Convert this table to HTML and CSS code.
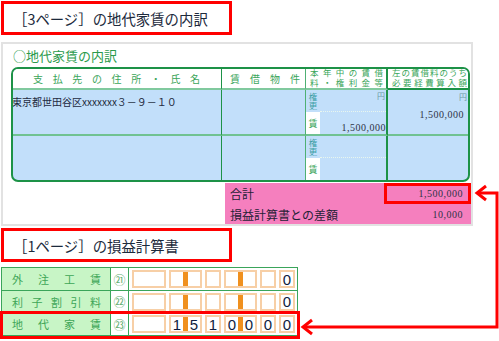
FILE: index.html
```html
<!DOCTYPE html>
<html lang="ja">
<head>
<meta charset="utf-8">
<title>地代家賃の内訳</title>
<link rel="stylesheet" href="styles.css">
</head>
<body>
<div class="page">
  <div class="heading">［3ページ］の地代家賃の内訳</div>

  <section class="panel">
    <div class="panel-title">○地代家賃の内訳</div>
    <div class="rent">
      <div class="hc c1 h1"><span>支</span><span>払</span><span>先</span><span>の</span><span>住</span><span>所</span><span>・</span><span>氏</span><span>名</span></div>
      <div class="hc c2 h2"><span>賃</span><span>借</span><span>物</span><span>件</span></div>
      <div class="hc c3 h3">
        <div class="hl"><span>本</span><span>年</span><span>中</span><span>の</span><span>賃</span><span>借</span></div>
        <div class="hl"><span>料</span><span>・</span><span>権</span><span>利</span><span>金</span><span>等</span></div>
      </div>
      <div class="hc c4 h4">
        <div class="hl"><span>左</span><span>の</span><span>賃</span><span>借</span><span>料</span><span>の</span><span>う</span><span>ち</span></div>
        <div class="hl"><span>必</span><span>要</span><span>経</span><span>費</span><span>算</span><span>入</span><span>額</span></div>
      </div>

      <div class="dc c1 r1 addr">東京都世田谷区xxxxxxx３－９－１０</div>
      <div class="dc c2 r1"></div>
      <div class="dc c3 r1 split">
        <div class="strip"><div class="strip-top"><span class="vt">権更</span></div><div class="strip-bot">賃</div></div>
        <div class="amt"><div class="amt-top"><span class="yen">円</span></div><div class="amt-bot"><span class="num">1,500,000</span></div></div>
      </div>
      <div class="dc c4 r1 deduct"><span class="yen">円</span><span class="num">1,500,000</span></div>

      <div class="dc c1"></div>
      <div class="dc c2"></div>
      <div class="dc c3 split">
        <div class="strip"><div class="strip-top"><span class="vt">権更</span></div><div class="strip-bot">賃</div></div>
        <div class="amt"><div class="amt-top"></div><div class="amt-bot"></div></div>
      </div>
      <div class="dc c4"></div>
    </div>

    <div class="summary">
      <div class="sum-row"><span class="sum-label">合計</span><span class="sum-val boxed">1,500,000</span></div>
      <div class="sum-row"><span class="sum-label">損益計算書との差額</span><span class="sum-val">10,000</span></div>
    </div>
  </section>

  <div class="heading heading-2">［1ページ］の損益計算書</div>

  <div class="ledger">
    <div class="lrow">
      <div class="llabel"><span>外</span><span>注</span><span>工</span><span>賃</span></div>
      <div class="lnum">㉑</div>
      <div class="lboxes">
        <span class="box wide"></span>
        <span class="box pair"><span class="dg"></span><span class="bar"></span><span class="dg"></span></span>
        <span class="box"><span class="dg"></span></span>
        <span class="box pair"><span class="dg"></span><span class="bar"></span><span class="dg"></span></span>
        <span class="box"><span class="dg"></span></span>
        <span class="box"><span class="dg">0</span></span>
      </div>
    </div>
    <div class="lrow">
      <div class="llabel"><span>利</span><span>子</span><span>割</span><span>引</span><span>料</span></div>
      <div class="lnum">㉒</div>
      <div class="lboxes">
        <span class="box wide"></span>
        <span class="box pair"><span class="dg"></span><span class="bar"></span><span class="dg"></span></span>
        <span class="box"><span class="dg"></span></span>
        <span class="box pair"><span class="dg"></span><span class="bar"></span><span class="dg"></span></span>
        <span class="box"><span class="dg"></span></span>
        <span class="box"><span class="dg">0</span></span>
      </div>
    </div>
    <div class="lrow lrow-hl">
      <div class="llabel"><span>地</span><span>代</span><span>家</span><span>賃</span></div>
      <div class="lnum">㉓</div>
      <div class="lboxes">
        <span class="box wide"></span>
        <span class="box pair"><span class="dg">1</span><span class="bar"></span><span class="dg">5</span></span>
        <span class="box"><span class="dg">1</span></span>
        <span class="box pair"><span class="dg">0</span><span class="bar"></span><span class="dg">0</span></span>
        <span class="box"><span class="dg">0</span></span>
        <span class="box"><span class="dg">0</span></span>
      </div>
    </div>
  </div>

  <svg class="arrow" width="499" height="341" viewBox="0 0 499 341">
    <path d="M303 327 H497 V193 H477" fill="none" stroke="#ff0000" stroke-width="3"/>
    <polyline points="312,320 303,327 312,334" fill="none" stroke="#ff0000" stroke-width="3"/>
    <polyline points="486,186 477,193 486,200" fill="none" stroke="#ff0000" stroke-width="3"/>
  </svg>
</div>
</body>
</html>
```

FILE: styles.css
```css
* { box-sizing: border-box; margin: 0; padding: 0; }
body { margin: 0; background: #fff; font-family: "Noto Sans CJK JP", sans-serif; color: #222; }
.page { position: relative; width: 499px; height: 341px; overflow: hidden; }

.heading {
  margin: 1px 0 0 1px;
  width: 231px;
  height: 34px;
  border: 3px solid #ff0000;
  padding: 1px 0 0 9px;
  font-size: 14.4px;
  line-height: 27px;
  color: #1c2a3c;
  white-space: nowrap;
}
.heading-2 { margin-top: 2px; }

.panel {
  margin: 7px 0 0 1px;
  width: 472px;
  height: 184px;
  border: 2px solid #e2e2e2;
}
.panel-title {
  height: 23px;
  line-height: 24px;
  padding-left: 10px;
  font-size: 13px;
  color: #2b9a4b;
}

.rent {
  margin-left: 8px;
  width: 459px;
  height: 115px;
  border: 2px solid #1d9247;
  border-radius: 7px;
  overflow: hidden;
  display: grid;
  grid-template-columns: 209px 84px 82px 80px;
  grid-template-rows: 21px 46px 44px;
  background: #c2dffa;
}
.c1 { border-right: 1px solid #1d9247; }
.c2 { border-right: 1px solid #4fb073; }
.c3 { border-right: 2px solid #1d9247; }

.hc {
  background: #fff;
  border-bottom: 2px solid #80c99e;
  color: #3aa55a;
  font-size: 10px;
}
.hc.c4 { border-bottom-color: #1d9247; }
.h1, .h2 { display: flex; justify-content: space-between; align-items: center; }
.h1 { padding: 0 21px 0 20px; }
.h2 { padding: 0 5px 0 8px; }
.h3, .h4 {
  display: flex;
  flex-direction: column;
  justify-content: center;
  font-family: "Liberation Sans", "Noto Sans CJK JP", sans-serif;
  font-size: 8.5px;
}
.h3 { padding: 0 3px 0 4px; }
.h4 { padding: 0 1px 0 4px; }
.hl { display: flex; justify-content: space-between; line-height: 9.5px; height: 9.5px; }

.r1 { border-bottom: 2px solid #70c291; }
.addr {
  padding: 5px 0 0 0;
  margin-left: -1px;
  font-size: 10px;
  line-height: 14px;
  color: #1e2a40;
  white-space: nowrap;
}
.split { display: flex; }
.strip { width: 14px; display: flex; flex-direction: column; }
.strip-top {
  height: 22px;
  display: flex;
  justify-content: center;
  padding-top: 3px;
  color: #3d9ea6;
}
.vt {
  writing-mode: vertical-rl;
  font-size: 8.5px;
  line-height: 10px;
}
.strip-bot {
  flex: 1;
  display: flex;
  align-items: center;
  justify-content: center;
  font-size: 9px;
  color: #3aa55a;
  background: #fff;
}
.amt { flex: 1; display: flex; flex-direction: column; }
.amt-top {
  height: 22px;
  border-bottom: 1px dotted #e9f7ee;
  text-align: right;
  padding-right: 1px;
}
.amt-bot { flex: 1; display: flex; align-items: flex-end; justify-content: flex-end; }
.yen { font-size: 8px; line-height: 12px; color: #6a9ba3; display: block; }
.num {
  font-family: "Liberation Serif", serif;
  font-size: 10px;
  letter-spacing: 0.5px;
  line-height: 13px;
  color: #2e3346;
}
.deduct { display: flex; flex-direction: column; align-items: flex-end; padding: 1px 1px 0 0; }
.deduct .num { margin-top: 5px; margin-right: 3px; }

.summary {
  margin: 1px 0 0 222px;
  height: 41px;
  background: #f57fbe;
}
.sum-row { display: flex; justify-content: space-between; align-items: center; height: 20px; }
.sum-row:first-child { height: 21px; }
.sum-label { padding-left: 5px; font-size: 12px; color: #262236; }
.sum-val {
  width: 87px;
  height: 100%;
  display: flex;
  align-items: center;
  justify-content: flex-end;
  padding-right: 8px;
  font-family: "Liberation Serif", serif;
  font-size: 10px;
  letter-spacing: 0.5px;
  color: #2e3346;
}
.sum-val.boxed { border: 3px solid #ff0000; padding-right: 5px; }

.ledger {
  margin: 5px 0 0 1px;
  width: 297px;
  border: 1px solid #3aa55a;
}
.lrow { display: flex; height: 22px; }
.lrow + .lrow { border-top: 1px solid #3aa55a; }
.lrow-hl { position: relative; height: 23px; }
.lrow-hl::after {
  content: "";
  position: absolute;
  left: -2px;
  top: -2px;
  right: -3px;
  bottom: -4px;
  border: 3px solid #ff0000;
}
.llabel {
  width: 109px;
  background: #c8f5c6;
  border-right: 1px solid #3aa55a;
  display: flex;
  justify-content: space-between;
  align-items: center;
  padding: 0 9px 0 10px;
  font-size: 11px;
  color: #3ea657;
}
.lnum {
  width: 18px;
  border-right: 1px solid #3aa55a;
  display: flex;
  align-items: center;
  justify-content: center;
  font-size: 12px;
  color: #5fae70;
}
.lboxes { flex: 1; display: flex; align-items: center; gap: 3px; padding-left: 3px; }
.box {
  display: flex;
  height: 18px;
  border: 2px solid #f7cfa6;
}
.box.wide { width: 34px; }
.dg {
  width: 12px;
  display: flex;
  align-items: center;
  justify-content: center;
  font-family: "Liberation Sans", sans-serif;
  font-size: 15px;
  color: #0f1d40;
}
.bar { width: 5px; background: #f0901e; }

.arrow { position: absolute; left: 0; top: 0; }
```
